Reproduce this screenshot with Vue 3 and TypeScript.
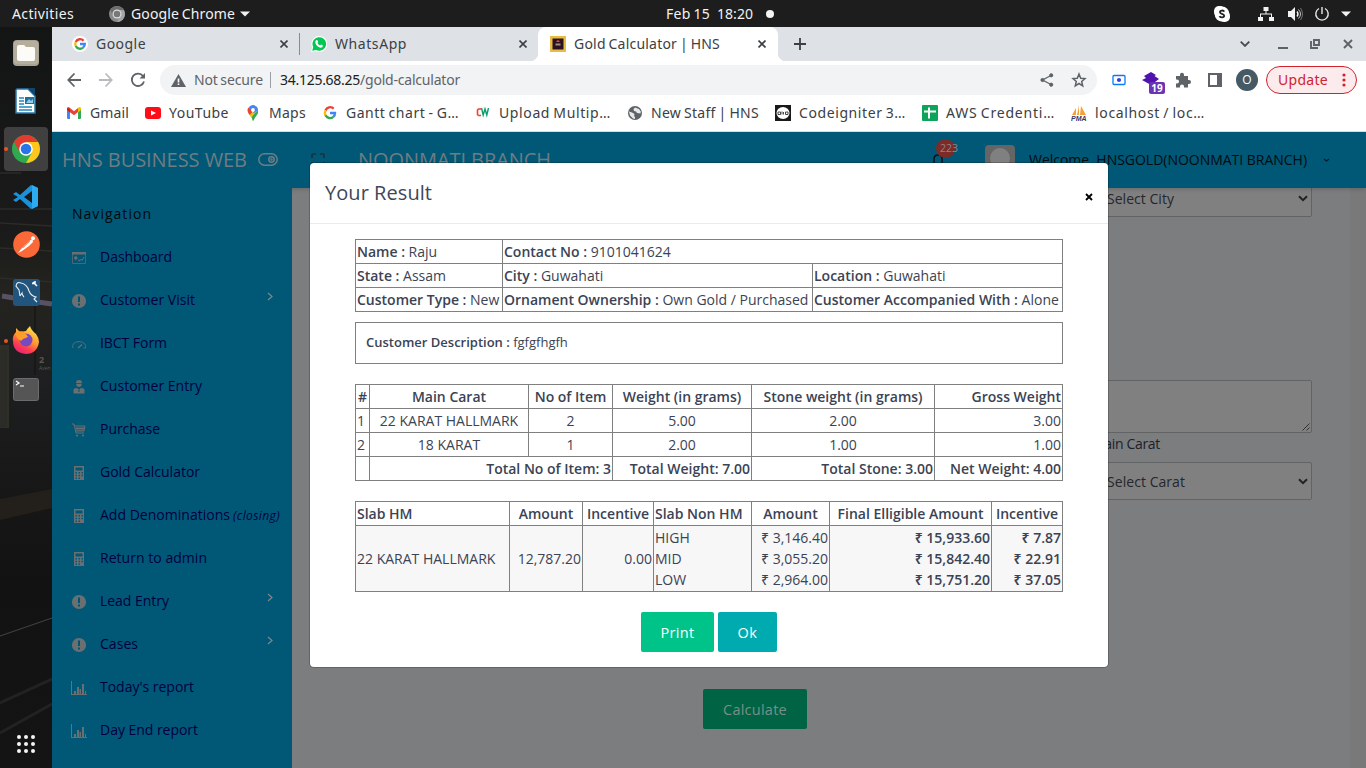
<script setup lang="ts">
interface Fit { value: number }
interface Tab { title: string; width: number; icon: string; active?: boolean }
interface Bookmark { title: string; width: number; icon: string }
interface NavItem { label: string; width: number; icon: string; note?: string; more?: boolean }

// Spreads a one-line label over the given width by adjusting its tracking.
const vFit = {
  mounted(el: HTMLElement, binding: Fit) {
    const count = (el.textContent ?? '').length
    const natural = el.getBoundingClientRect().width
    el.style.letterSpacing = `${(binding.value - natural) / count}px`
  },
}

const tabs: Tab[] = [
  { title: 'Google', width: 50, icon: 'google' },
  { title: 'WhatsApp', width: 72, icon: 'whatsapp' },
  { title: 'Gold Calculator | HNS', width: 146, icon: 'gold', active: true },
]

const bookmarks: Bookmark[] = [
  { title: 'Gmail', width: 39, icon: 'gmail' },
  { title: 'YouTube', width: 60, icon: 'youtube' },
  { title: 'Maps', width: 37, icon: 'maps' },
  { title: 'Gantt chart - G…', width: 113, icon: 'google' },
  { title: 'Upload Multip…', width: 112, icon: 'cw' },
  { title: 'New Staff | HNS', width: 108, icon: 'globe' },
  { title: 'Codeigniter 3…', width: 107, icon: 'code' },
  { title: 'AWS Credenti…', width: 109, icon: 'sheet' },
  { title: 'localhost / loc…', width: 110, icon: 'pma' },
]

const nav: NavItem[] = [
  { label: 'Dashboard', width: 72, icon: 'dash' },
  { label: 'Customer Visit', width: 95, icon: 'alert', more: true },
  { label: 'IBCT Form', width: 67, icon: 'gauge' },
  { label: 'Customer Entry', width: 102, icon: 'user' },
  { label: 'Purchase', width: 60, icon: 'cart' },
  { label: 'Gold Calculator', width: 100, icon: 'calc' },
  { label: 'Add Denominations', width: 130, icon: 'calc', note: '(closing)' },
  { label: 'Return to admin', width: 107, icon: 'calc' },
  { label: 'Lead Entry', width: 69, icon: 'alert', more: true },
  { label: 'Cases', width: 38, icon: 'alert', more: true },
  { label: "Today's report", width: 94, icon: 'chart' },
  { label: 'Day End report', width: 98, icon: 'chart' },
]

const items = [
  ['1', '22 KARAT HALLMARK', '2', '5.00', '2.00', '3.00'],
  ['2', '18 KARAT', '1', '2.00', '1.00', '1.00'],
]
</script>

<template>
  <div class="desktop">
    <header class="topbar">
      <span v-fit="62" class="t activities">Activities</span>
      <svg class="top-chrome" width="16" height="16" viewBox="0 0 16 16">
        <circle cx="8" cy="8" r="8" fill="#8b8b8b" />
        <path d="M1.2 4A8 8 0 0 1 14.8 4H8L4.5 10Z" fill="#6d6d6d" />
        <path d="M11.5 10L8 16A8 8 0 0 0 14.8 4H8Z" fill="#a5a5a5" />
        <circle cx="8" cy="8" r="4.5" fill="#ddd" /><circle cx="8" cy="8" r="3.3" fill="#777" />
      </svg>
      <span v-fit="104" class="t">Google Chrome</span>
      <svg class="top-caret" width="10" height="6"><path d="M0 .5H10L5 5.5Z" fill="#f2f2f2" /></svg>
      <div class="clock"><span v-fit="44" class="t">Feb 15</span><span v-fit="36" class="t time">18:20</span><i></i></div>
      <div class="status">
        <svg width="16" height="16" viewBox="0 0 16 16"><rect width="11" height="11" rx="5" fill="#fff" /><rect x="5" y="5" width="11" height="11" rx="5" fill="#fff" /><circle cx="8" cy="8" r="7.4" fill="#fff" /><path d="M10.3 5.6C9.5 4 5.9 4.200 6 6.200C6.100 8.300 10.200 7.400 10.200 9.800C10.100 12 6.200 11.900 5.500 10.200" fill="none" stroke="#222" stroke-width="1.8" /></svg>
        <svg class="net" width="16" height="16" viewBox="0 0 16 16" fill="#f2f2f2"><path d="M5.5 1h5v4h-2v2.500h5.500V11h2v4h-5v-4h2V8.500h-10V11h2v4H0v-4h2V7.500h5.500V5h-2z" /></svg>
        <svg class="vol" width="16" height="16" viewBox="0 0 16 16"><path d="M1 5h3l4-4v14l-4-4H1z" fill="#f2f2f2" /><path d="M10 5.500q2 2.500 0 5" fill="none" stroke="#f2f2f2" stroke-width="1.400" /><path d="M11.500 3.500q4 4.500 0 9" fill="none" stroke="#ccc" /><path d="M13.500 2q4 6 0 12" fill="none" stroke="#888" stroke-width=".8" /></svg>
        <svg class="pow" width="16" height="16" viewBox="0 0 16 16" fill="none" stroke="#e8e8e8" stroke-width="1.400"><path d="M5 2.500a6.200 6.200 0 1 0 6 0M8 1v7" /></svg>
        <svg class="car" width="10" height="6"><path d="M0 .5H10L5 5.5Z" fill="#f2f2f2" /></svg>
      </div>
    </header>

    <div class="workspace">
      <aside class="dock">
        <svg class="wall" width="52" height="741" viewBox="0 27 52 741">
          <defs>
            <linearGradient id="wg" x1="0" y1="0" x2="0" y2="1">
              <stop offset="0" stop-color="#131414" /><stop offset=".27" stop-color="#191a19" /><stop offset=".36" stop-color="#24231f" /><stop offset=".48" stop-color="#1d1f20" /><stop offset=".6" stop-color="#181818" /><stop offset=".75" stop-color="#121212" /><stop offset="1" stop-color="#141414" />
            </linearGradient>
          </defs>
          <rect y="27" width="52" height="741" fill="url(#wg)" />
          <g stroke="#2b2b28" stroke-width="1.5"><path d="M0 173H21M0 209H52M0 223L52 226M0 248L52 251M0 278L52 282" /></g>
          <path d="M2 296L20 299M38 302L52 304" stroke="#6e6681" stroke-width="5" opacity=".7" />
          <path d="M0 345H9V428H0" fill="#302f25" /><path d="M0 350H7V427H0" fill="#2b2c28" />
          <path d="M35 305V375" stroke="#111" />
          <text x="39" y="363" class="wall-number">2</text><text x="39" y="370" class="wall-street">Aven</text>
          <path d="M0 499L52 489V508L0 520Z" fill="#231f1b" />
          <path d="M0 636L52 618" stroke="#454442" /><path d="M0 703L52 679M0 733L52 704" stroke="#222" stroke-width="3" />
        </svg>
        <div class="app"><svg width="26" height="26" viewBox="0 0 26 26"><rect width="26" height="26" rx="4" fill="#a8a294" /><rect x="1" y="1" width="24" height="23" rx="3" fill="#b5ae9d" /><path d="M4 7q0-2 2-2h5l2 2h7q2 0 2 2v10q0 2-2 2H6q-2 0-2-2z" fill="#fcfbf8" /></svg></div>
        <div class="app"><svg width="24" height="26" viewBox="0 0 24 26"><path d="M3 1H14L21 8V25H2V2Z" fill="#fff" stroke="#247aaa" stroke-width="1.500" /><path d="M14 0H21V8Z" fill="#0d4770" /><path d="M5 10h5M5 13h5M5 16h5M5 19h13M5 22h13" stroke="#2386bd" stroke-width="1.300" /><rect x="11" y="9" width="9" height="7" fill="#1d719f" /><path d="M12 15l3-4 2 2 2-2v4z" fill="#91cdef" /></svg></div>
        <div class="app selected"><svg width="28" height="28" viewBox="0 0 28 28"><circle cx="14" cy="14" r="14" fill="#2faa50" /><path d="M1.900 7A14 14 0 0 1 26.100 7H14L8 17.500Z" fill="#e33b2e" /><path d="M26.100 7A14 14 0 0 1 14 28L20 17.500L14 7Z" fill="#fdc81b" /><circle cx="14" cy="14" r="6.800" fill="#fff" /><circle cx="14" cy="14" r="5.300" fill="#2875e8" /></svg></div>
        <div class="app"><svg width="26" height="26" viewBox="0 0 26 26"><path d="M18 1L25 4V22L18 25L7 15L3 18L0 16L5 13L0 10L3 8L7 11ZM19 7L11 13L19 19Z" fill="#1a91d9" fill-rule="evenodd" /><path d="M19 1L25 4V22L19 25Z" fill="#2eaaf1" /></svg></div>
        <div class="app raised"><svg width="27" height="27" viewBox="0 0 27 27"><circle cx="13.500" cy="13.500" r="13.300" fill="#fb6939" /><circle cx="20" cy="7.200" r="2" fill="#fff" /><path d="M19.500 8.500L17.500 9L9 17L5 22L9 20L16 15L20 11Z" fill="#fff" /><path d="M17 10L10 17" stroke="#fb6939" stroke-width=".7" /></svg></div>
        <div class="app raised"><svg width="27" height="27" viewBox="0 0 27 27"><rect width="27" height="27" rx="3" fill="#21557d" /><path d="M7 17L6 11L3 7Q4 2 8 4Q14 5 16 12Q18 17 23 18L21 20L24 23M7 17L9 14Q9 16 11 18" fill="none" stroke="#e8edf1" stroke-width="1.100" /><path d="M20 3L24 7M19 4.500h3V2" stroke="#fff" stroke-width="1.500" fill="none" /></svg></div>
        <div class="app raised"><svg width="28" height="28" viewBox="0 0 28 28"><defs><linearGradient id="fg" x1=".8" y1="0" x2=".3" y2="1"><stop stop-color="#ffe94b" /><stop offset=".48" stop-color="#ff9830" /><stop offset=".75" stop-color="#ff3d50" /><stop offset="1" stop-color="#e62375" /></linearGradient></defs><path d="M14 5Q15 3 18 0Q19 4 24 8Q27 12 27 16Q25 28 14 28Q1 27 1 15Q0 10 4 6L4 2L8 6Z" fill="url(#fg)" /><circle cx="14" cy="14" r="6.500" fill="#784abe" /><path d="M5 6Q12 3 16 11L11 13L9 15Q3 12 5 6" fill="#ff9e27" /></svg></div>
        <div class="app"><svg width="26" height="23" viewBox="0 0 26 23"><rect x=".5" y=".5" width="25" height="22" rx="2" fill="#555" stroke="#6c6c6c" /><path d="M3 3l3 2-3 2M7 8h4" fill="none" stroke="#fff" stroke-width="1.200" /></svg></div>
        <svg class="grid-icon" width="18" height="18" viewBox="0 0 18 18" fill="#f4f4f4"><template v-for="r in 3" :key="r"><circle v-for="c in 3" :key="c" :cx="c * 7 - 5" :cy="r * 7 - 5" r="2" /></template></svg>
        <span class="dot d1"></span><span class="dot d2"></span>
      </aside>

      <div class="browser">
        <div class="tabs">
          <div v-for="tab in tabs" :key="tab.title" class="tab" :class="{ active: tab.active, line: tab.icon === 'google' }">
            <svg v-if="tab.icon === 'google'" width="16" height="16" viewBox="0 0 16 16" fill="none" stroke-width="2.300"><circle cx="8" cy="8" r="8" fill="#fff" /><path d="M11.600 4.800A4.800 4.800 0 0 0 3.700 5.900" stroke="#ea4335" /><path d="M3.700 5.900A4.800 4.800 0 0 0 3.700 10.100" stroke="#fbbc05" /><path d="M3.700 10.100A4.800 4.800 0 0 0 11.100 11.600" stroke="#34a853" /><path d="M11.100 11.600Q12.800 10.200 12.800 8H8" stroke="#4285f4" /></svg>
            <svg v-else-if="tab.icon === 'whatsapp'" width="16" height="16" viewBox="0 0 16 16"><path d="M0 16L1.200 11.500A8 8 0 1 1 4.500 15Z" fill="#fff" /><path d="M1.200 14.800L2.200 11A6.800 6.800 0 1 1 5 13.900Z" fill="#00c853" /><path d="M5 4.200L6.300 4L7.200 6L6.500 7Q7.400 8.800 9 9.500L10 8.600L12 9.500Q11.800 11.700 9.600 11.700Q6.500 11.400 4.500 7.500Q3.900 5.500 5 4.200" fill="#fff" /></svg>
            <svg v-else width="16" height="16" viewBox="0 0 16 16"><rect width="16" height="16" fill="#e8bd43" /><rect x="2.500" y="2.500" width="11" height="11" fill="#2b1220" /><path d="M6.500 5l1.500-1 1.500 1v1h-3z" fill="#f04428" /><path d="M5.500 7.500h5v2h-5z" fill="#a58a80" /></svg>
            <span v-fit="tab.width" class="t lift">{{ tab.title }}</span>
            <svg class="x" width="8" height="8" viewBox="0 0 8 8"><path d="M.5.5l7 7M7.500.5l-7 7" stroke="#3c4043" stroke-width="1.600" /></svg>
          </div>
          <svg class="plus" width="12" height="12"><path d="M6 0v12M0 6h12" stroke="#3c4043" stroke-width="1.800" /></svg>
          <div class="win">
            <svg class="w1" width="10" height="6"><path d="M.7.700l4.300 4.200L9.300.700" fill="none" stroke="#45494d" stroke-width="1.800" /></svg>
            <svg class="w2" width="10" height="10"><path d="M0 9h10" stroke="#5f6368" stroke-width="2" /></svg>
            <svg class="w3" width="10" height="10" fill="none" stroke="#5f6368" stroke-width="1.900"><path d="M4 1h5v5H4zM1 2v7h7" /></svg>
            <svg width="10" height="10"><path d="M1 1l8 8M9 1L1 9" stroke="#5f6368" stroke-width="1.900" /></svg>
          </div>
        </div>

        <div class="toolbar">
          <svg class="arrow" width="32" height="16" viewBox="-9 0 32 16" fill="none" stroke="#5f6368" stroke-width="1.800"><path d="M14 8H1.500M7.500 1.500L1.300 8L7.500 14.500" /></svg>
          <svg width="32" height="16" viewBox="-9 0 32 16" fill="none" stroke="#b9bbbe" stroke-width="1.800"><path d="M0 8H12.500M6.500 1.500L12.700 8L6.500 14.500" /></svg>
          <svg width="32" height="16" viewBox="-8 0 32 16" fill="none" stroke="#5f6368" stroke-width="1.800"><path d="M13 4A6.200 6.200 0 1 0 14 9.500" /><path d="M15 1V6.500H9.500Z" fill="#5f6368" stroke="none" /></svg>
          <div class="omnibox">
            <svg class="warn" width="15" height="13" viewBox="0 0 15 13"><path d="M7.500 0L15 13H0Z" fill="#5f6368" /><path d="M7.500 4.500v4M7.500 9.500v1.600" stroke="#fff" stroke-width="1.600" /></svg>
            <span v-fit="69" class="t lift muted">Not secure</span><i class="sep"></i><span v-fit="80" class="t lift host">34.125.68.25</span><span v-fit="100" class="t lift muted">/gold-calculator</span>
            <svg class="share" width="14" height="14" viewBox="0 0 14 14" stroke="#5f6368" fill="#5f6368"><circle cx="11.200" cy="2.300" r="1.600" /><circle cx="2.500" cy="7" r="1.600" /><circle cx="11.200" cy="11.700" r="1.600" /><path d="M11 2.500L2.500 7L11 11.500" fill="none" stroke-width="1.300" /></svg>
            <svg width="16" height="16" viewBox="0 0 16 16"><path d="M8 2L9.700 6.200l4.300.400-3.300 2.900 1 4.300L8 11.500l-3.700 2.300 1-4.300L2 6.600l4.300-.400z" fill="none" stroke="#5f6368" stroke-width="1.500" /></svg>
          </div>
          <div class="ext"><svg width="14" height="12"><rect x="1" y="1.500" width="12" height="9" rx="1" fill="#fff" stroke="#087af5" stroke-width="1.300" /><circle cx="7" cy="6" r="2.100" fill="#3941d9" /></svg></div>
          <div class="ext"><svg width="18" height="16" viewBox="0 0 18 16"><path d="M9 0L14 3L12.500 4L17 7L9 13L0 8L4 6L2 4Z" fill="#5113ad" /></svg><b>19</b></div>
          <div class="ext"><svg width="16" height="16" viewBox="0 0 16 16"><path d="M1 4h4V2.800a2 2 0 0 1 4 0V4h4v4h1a2 2 0 0 1 0 4h-1v3.500H9v-1a2 2 0 0 0-4 0v1H1v-4h1a2 2 0 0 0 0-4H1z" fill="#5f6368" /></svg></div>
          <div class="ext"><svg width="14" height="14"><rect x="1" y="1" width="12" height="12" fill="#fff" stroke="#5f6368" stroke-width="2" /><path d="M9 1h4v12H9z" fill="#5f6368" /></svg></div>
          <div class="ext"><em class="avatar">O</em></div>
          <div class="update"><span v-fit="50" class="t lift">Update</span><svg width="4" height="14" fill="#d2222c"><circle cx="2" cy="2" r="1.600" /><circle cx="2" cy="7" r="1.600" /><circle cx="2" cy="12" r="1.600" /></svg></div>
        </div>

        <div class="bookmarks">
          <div v-for="b in bookmarks" :key="b.title" class="bm">
            <svg width="16" height="16" viewBox="0 0 16 16">
              <g v-if="b.icon === 'gmail'"><path d="M1 3h3v11H2q-1 0-1-1z" fill="#4285f4" /><path d="M12 5l3-2v10q0 1-1 1h-2z" fill="#34a853" /><path d="M1 3q1-2 3 0l4 3.200L12 3v4L8 10.300 1 5z" fill="#ea4335" /><path d="M12 3q2-2 3 0v2L12 7.500z" fill="#fbbc04" /><path d="M1 3v2l3 2.500V4z" fill="#c5221f" /></g>
              <g v-else-if="b.icon === 'youtube'"><rect y="2" width="16" height="12" rx="3" fill="#fe0d16" /><path d="M6 5.500L11 8 6 10.500z" fill="#fff" /></g>
              <g v-else-if="b.icon === 'maps'"><path d="M8 16Q7.200 12.500 4.500 9.500L12.800 5Q14 8.500 10.500 12Q9 14 8 16" fill="#34a853" /><path d="M3.500 2.500L9 6 4.500 10Q1 5 3.500 2.500" fill="#ea4335" /><path d="M11 5L4.500 10Q6 12 6.500 12.800L13 6z" fill="#fbbc04" /><path d="M4 2Q8-2 12 2Q13 3.500 13 5L9 8L4.500 3.500z" fill="#4285f4" /><path d="M13 5Q13 9 10 12L8 16Q7 13 7.500 11z" fill="#34a853" /><circle cx="8" cy="5" r="1.900" fill="#fff" /></g>
              <g v-else-if="b.icon === 'google'" fill="none" stroke-width="2.400"><path d="M11.700 3.600A5 5 0 0 0 3.500 5.500" stroke="#ea4335" /><path d="M3.500 5.500A5 5 0 0 0 3.500 10.300" stroke="#fbbc05" /><path d="M3.500 10.300A5 5 0 0 0 11.300 11.900" stroke="#34a853" /><path d="M11.300 11.900Q13 10.400 13 8H8" stroke="#4285f4" /></g>
              <g v-else-if="b.icon === 'cw'" fill="none" stroke-width="1.600"><path d="M6 4H3.500L2.500 5v4.500l1 1H6" stroke="#f3422e" /><path d="M6.500 3L8.200 10L10 4L11.800 10L13.500 3" stroke="#0a9e70" stroke-width="1.400" /></g>
              <g v-else-if="b.icon === 'globe'"><circle cx="8" cy="8" r="7" fill="#5f6368" /><path d="M2 6.500l3 1 2.500 1.500-.5 2 1 1v2l-2-.5-3-3zM8 2.500L6.500 4l.5 2 2 .5 1 1.500 3.500.5.300-2L12 4z" fill="#fff" opacity=".85" /></g>
              <g v-else-if="b.icon === 'code'"><rect width="16" height="16" fill="#17191b" /><ellipse cx="8" cy="8" rx="6.500" ry="6" fill="#fff" /><path d="M3 7h2.500v2.500H3zM7 6.500v3M8.500 7v2.500M10.500 7H13v2.500h-2.500z" fill="none" stroke="#333" stroke-width=".9" /></g>
              <g v-else-if="b.icon === 'sheet'"><rect width="16" height="16" rx="1" fill="#0ca45b" /><path d="M2 6.500h12M7 2.500v11" stroke="#fff" stroke-width="2" /></g>
              <g v-else><path d="M1 10L5 3v7zM6 10L8 0v10zM9 10L10 1 15 10z" fill="#f6a136" /><text x="0" y="15.500" class="pma">PMA</text></g>
            </svg>
            <span v-fit="b.width" class="t">{{ b.title }}</span>
          </div>
        </div>

        <div class="page">
          <div class="site-head">
            <span v-fit="185" class="brand">HNS BUSINESS WEB</span>
            <svg class="toggle" width="20" height="13" viewBox="0 0 20 13" fill="none" stroke="#6e7d84" stroke-width="1.500"><rect x=".8" y=".8" width="18.400" height="11.400" rx="5.700" /><circle cx="13.500" cy="6.500" r="2.700" /><circle cx="13.500" cy="6.500" r=".5" /></svg>
            <svg class="full" width="14" height="14" viewBox="0 0 14 14" fill="none" stroke="#1c303a" stroke-width="1.600"><path d="M1 5V2q0-1 1-1h3M9 1h3q1 0 1 1v3M13 9v3q0 1-1 1H9M5 13H2q-1 0-1-1V9" /></svg>
            <span v-fit="193" class="brand">NOONMATI BRANCH</span>
            <div class="bell"><svg width="14" height="15" viewBox="0 0 14 15" fill="none" stroke="#091015" stroke-width="1.500"><path d="M1 11.200H13M3 11V6Q3 2 7 2Q11 2 11 6V11M5 13q2 2 4 0" /></svg><i></i><span class="badge">223</span></div>
            <div class="person"><i></i></div>
            <span v-fit="278" class="welcome">Welcome, HNSGOLD(NOONMATI BRANCH)</span>
            <svg class="down" width="7" height="5"><path d="M1 1l2.500 2L6 1" fill="none" stroke="#071820" stroke-width="1.200" /></svg>
          </div>

          <div class="columns">
            <nav class="side">
              <h2><span v-fit="80">Navigation</span></h2>
              <a v-for="n in nav" :key="n.label">
                <svg width="16" height="16" viewBox="0 0 16 16" fill="#6a6f72">
                  <g v-if="n.icon === 'dash'"><path d="M1 2h14v2.500H1z" /><path d="M1.500 2.500h13v11h-13z" fill="none" stroke="#6a6f72" stroke-width=".7" /><path d="M7 10l1.500 1 1-2 1.500 1.500L13 7" fill="none" stroke="#6a6f72" /><circle cx="4.800" cy="8" r="1.800" /></g>
                  <g v-else-if="n.icon === 'alert'"><circle cx="8" cy="8" r="7.100" /><path d="M8 3.500v5.500M8 10.500v2" stroke="#005573" stroke-width="2" /></g>
                  <g v-else-if="n.icon === 'gauge'" fill="none" stroke="#6a6f72"><path d="M2 12Q0 6.500 8 5.500Q16 6.500 14.500 12H12.500" stroke-width=".8" /><path d="M7 12L11 8.500" stroke-width="1.300" /></g>
                  <g v-else-if="n.icon === 'user'"><path d="M5 4Q5 1 8 1T11 4H5ZM5.200 4.700h5.600Q10.500 8 8 8T5.200 4.700ZM2.500 14.500V11q0-2 3.500-2l2 1.500L10 9q3.500 0 3.500 2v3.500z" /><path d="M8 10.500v2.500" stroke="#005573" /></g>
                  <g v-else-if="n.icon === 'cart'" fill="none" stroke="#6a6f72"><path d="M1 2h2l2 9h8M4 4h10l-1 5H5M6 5v4M8 5v4M10 5v4M12 5v4M4.500 6.500h9" /><circle cx="6" cy="13.500" r="1" fill="#6a6f72" stroke="none" /><circle cx="12" cy="13.500" r="1" fill="#6a6f72" stroke="none" /></g>
                  <g v-else-if="n.icon === 'calc'"><path d="M3 1h10v14H3zM4.500 2.500v3h7v-3zM4.500 7v1.500H6V7zm3 0v1.500H9V7zm3 0v1.500H12V7zm-6 2.800v1.500H6V9.800zm3 0v1.500H9V9.800zm3 0v1.500H12V9.800zm-6 2.700V14H6v-1.500zm3 0V14H9v-1.500z" fill-rule="evenodd" /></g>
                  <g v-else><path d="M0 1h1v13h15v1H0z" /><path d="M3 11h2v3H3zM6 7h2v7H6zM8.500 9h1.500v5H8.500zM11 4h2v10h-2zM14 11h1v3h-1z" /></g>
                </svg>
                <span v-fit="n.width" class="label">{{ n.label }}</span>
                <span v-if="n.note" v-fit="47" class="note">{{ n.note }}</span>
                <svg v-if="n.more" class="more" width="6" height="9"><path d="M1 1l4 3.500L1 8" fill="none" stroke="#80878a" stroke-width="1.200" /></svg>
              </a>
            </nav>
            <main class="main">
              <div class="form">
                <div class="select city"><span v-fit="67">Select City</span><svg width="10" height="7"><path d="M1 1.200l4 4 4-4" fill="none" stroke="#202124" stroke-width="2" /></svg></div>
                <div class="area"><svg width="8" height="8"><path d="M.5 7.500l7-7M4.500 7.500l3-3" stroke="#333" /></svg></div>
                <div class="carat"><span v-fit="68">Main Carat</span></div>
                <div class="select"><span v-fit="78">Select Carat</span><svg width="10" height="7"><path d="M1 1.200l4 4 4-4" fill="none" stroke="#202124" stroke-width="2" /></svg></div>
              </div>
              <button class="calculate"><span v-fit="64">Calculate</span></button>
            </main>
          </div>

          <section class="modal">
            <header><h1><span v-fit="107">Your Result</span></h1><svg width="8" height="8"><path d="M1 1l6 6M7 1L1 7" stroke="#000" stroke-width="1.800" /></svg></header>
            <div class="body">
              <table>
                <colgroup><col class="c147"><col class="c310"><col class="c250"></colgroup>
                <tbody>
                  <tr><td><b>Name :</b> Raju</td><td colspan="2"><b>Contact No :</b> 9101041624</td></tr>
                  <tr><td><b>State :</b> Assam</td><td><b>City :</b> Guwahati</td><td><b>Location :</b> Guwahati</td></tr>
                  <tr><td><b>Customer Type :</b> New</td><td><b>Ornament Ownership :</b> Own Gold / Purchased</td><td><b>Customer Accompanied With :</b> Alone</td></tr>
                </tbody>
              </table>
              <p class="desc"><b>Customer Description :</b> fgfgfhgfh</p>
              <table class="carats">
                <colgroup><col class="c14"><col class="c159"><col class="c84"><col class="c139"><col class="c183"><col class="c128"></colgroup>
                <thead><tr><th>#</th><th>Main Carat</th><th>No of Item</th><th>Weight (in grams)</th><th>Stone weight (in grams)</th><th class="r">Gross Weight</th></tr></thead>
                <tbody>
                  <tr v-for="row in items" :key="row[0]"><td v-for="(cell, i) in row" :key="i" :class="i === 0 ? 'l' : i === 5 ? 'r' : 'c'">{{ cell }}</td></tr>
                  <tr class="total"><td></td><td colspan="2">Total No of Item: 3</td><td>Total Weight: 7.00</td><td>Total Stone: 3.00</td><td>Net Weight: 4.00</td></tr>
                </tbody>
              </table>
              <table class="slabs">
                <colgroup><col class="c154"><col class="c73"><col class="c71"><col class="c98"><col class="c78"><col class="c162"><col class="c71"></colgroup>
                <thead><tr><th class="l">Slab HM</th><th>Amount</th><th>Incentive</th><th class="l">Slab Non HM</th><th>Amount</th><th>Final Elligible Amount</th><th>Incentive</th></tr></thead>
                <tbody><tr>
                  <td>22 KARAT HALLMARK</td><td class="r">12,787.20</td><td class="r">0.00</td><td>HIGH<br>MID<br>LOW</td>
                  <td class="r">₹ 3,146.40<br>₹ 3,055.20<br>₹ 2,964.00</td>
                  <td class="r"><b>₹ 15,933.60<br>₹ 15,842.40<br>₹ 15,751.20</b></td>
                  <td class="r"><b>₹ 7.87<br>₹ 22.91<br>₹ 37.05</b></td>
                </tr></tbody>
              </table>
              <div class="actions"><button class="print"><span v-fit="34">Print</span></button><button class="ok"><span v-fit="20">Ok</span></button></div>
            </div>
          </section>
        </div>
      </div>
    </div>
  </div>
</template>

<style>
body { margin: 0; overflow: hidden; }
</style>

<style scoped>
* { box-sizing: border-box; }
svg { flex: none; display: block; }
.desktop { width: 1366px; height: 768px; overflow: hidden; display: flex; flex-direction: column; font-family: "Open Sans", "Noto Sans", sans-serif; font-size: 14px; }
.t { font-family: "Noto Sans", "Open Sans", sans-serif; font-size: 14px; white-space: pre; flex: none; word-spacing: -1px; }
span { white-space: nowrap; flex: none; }
.lift { margin-top: -2px; }
.topbar { position: relative; height: 27px; flex: none; background: #1d1d1d; color: #f2f2f2; display: flex; align-items: center; padding-left: 12px; }
.top-chrome { margin: 0 6px 0 35px; }
.top-caret { margin-left: 5px; }
.clock { margin-left: 416px; display: flex; align-items: center; }
.clock .time { margin-left: 7px; }
.clock i { width: 8px; height: 8px; border-radius: 50%; background: #f5f5f5; margin-left: 13px; }
.status { display: flex; align-items: center; margin-left: auto; padding-right: 15px; }
.net { margin-left: 28px; }
.vol { margin-left: 13px; }
.pow { margin-left: 11px; }
.car { margin-left: 11px; }
.workspace { flex: 1; display: flex; min-height: 0; }
.dock { position: relative; width: 52px; flex: none; display: flex; flex-direction: column; align-items: center; padding-top: 2px; overflow: hidden; }
.wall { position: absolute; left: 0; top: 0; }
.wall-number { font: bold 9px "Open Sans", sans-serif; fill: #575753; }
.wall-street { font: 5px "Open Sans", sans-serif; fill: #575753; }
.app { position: relative; width: 44px; height: 44px; margin: 2px 0; border-radius: 4px; display: flex; align-items: center; justify-content: center; }
.raised { padding-bottom: 2px; }
.selected { background: #404040; }
.dot { position: absolute; left: 4px; width: 4px; height: 4px; border-radius: 50%; background: #e9541f; }
.d1 { top: 120px; }
.d2 { top: 312px; }
.grid-icon { position: relative; margin-top: auto; margin-bottom: 15px; }
.browser { flex: 1; display: flex; flex-direction: column; min-width: 0; background: #fff; color: #3c4043; }
.tabs { height: 34px; flex: none; background: #dee1e6; padding-left: 8px; display: flex; align-items: center; }
.tab { position: relative; width: 239px; height: 34px; display: flex; align-items: center; padding: 0 11px 0 12px; gap: 8px; }
.tab .x { margin-left: auto; }
.line { width: 240px; margin-right: -1px; border-right: 1px solid #898c91; border-image: linear-gradient(transparent 20%, #898c91 20%, #898c91 80%, transparent 80%) 1; }
.active { width: 240px; background: #fff; border-radius: 8px 8px 0 0; padding-right: 12px; }
.active::before, .active::after { content: ""; position: absolute; bottom: 0; width: 8px; height: 8px; }
.active::before { left: -8px; background: radial-gradient(circle at 0 0, #dee1e6 8px, #fff 8.5px); }
.active::after { right: -8px; background: radial-gradient(circle at 100% 0, #dee1e6 8px, #fff 8.5px); }
.plus { margin-left: 16px; }
.win { margin-left: auto; display: flex; align-items: center; padding-right: 13px; }
.w1 { margin-right: 28px; }
.w2 { margin-right: 22px; }
.w3 { margin-right: 23px; }
.toolbar { height: 38px; flex: none; display: flex; align-items: center; padding-left: 6px; }
.omnibox { width: 937px; height: 30px; border-radius: 15px; margin-left: 6px; background: #f1f3f4; display: flex; align-items: center; padding: 0 10px 0 11px; flex: none; }
.warn { margin-right: 8px; }
.muted { color: #5f6368; }
.host { color: #202124; }
.sep { width: 1px; height: 16px; background: #9aa0a6; margin: 0 9px 0 7px; }
.share { margin: 0 17px 0 auto; }
.ext { position: relative; width: 32px; height: 34px; display: flex; align-items: center; justify-content: center; left: 6px; }
.ext b { position: absolute; left: 14px; top: 19px; width: 16px; height: 12px; border-radius: 2px; background: #6b33b6; color: #fff; font-size: 10px; line-height: 12px; text-align: center; }
.avatar { width: 22px; height: 22px; border-radius: 50%; background: #455a64; color: #fff; font-style: normal; font-size: 12px; line-height: 22px; text-align: center; }
.update { width: 91px; height: 28px; margin-left: 9px; border: 1px solid #d2222c; border-radius: 14px; background: #fbebec; color: #d2222c; display: flex; align-items: center; justify-content: space-between; padding: 0 10px 0 11px; flex: none; }
.bookmarks { height: 33px; flex: none; display: flex; align-items: center; gap: 16px; padding: 0 0 5px 14px; border-bottom: 1px solid #dadce0; }
.bm { display: flex; align-items: center; gap: 8px; flex: none; }
.pma { font: italic bold 7px "Liberation Sans", sans-serif; fill: #353567; }
.page { position: relative; flex: 1; display: flex; flex-direction: column; min-height: 0; overflow: hidden; background: #7c7d7f; }
.site-head { height: 56px; flex: none; background: #005876; display: flex; align-items: center; padding: 0 0 2px 10px; box-shadow: 0 1px 5px rgba(0, 0, 0, .2); position: relative; }
.brand { font-size: 20px; color: #6f7c82; }
.toggle { margin: 1px 0 0 11px; }
.full { margin: 1px 33px 0; }
.bell { position: relative; width: 14px; margin: 2px 0 0 380px; }
.bell i { position: absolute; left: 5px; top: -14px; width: 19px; height: 19px; border-radius: 50%; background: #7d2b27; }
.badge { position: absolute; left: 9px; top: -13px; font-size: 10.5px; line-height: 16px; color: #8d8587; }
.person { width: 30px; height: 30px; border-radius: 4px; background: #656565; margin: 2px 14px 0 40px; display: flex; align-items: center; justify-content: center; }
.person i { width: 20px; height: 20px; border-radius: 50%; background: #808080; margin-top: -4px; }
.welcome { color: #000b11; }
.down { margin: 3px 0 0 16px; }
.columns { flex: 1; display: flex; min-height: 0; }
.side { position: relative; width: 240px; flex: none; background: #005876; padding: 5px 0 0 20px; color: #00003f; }
.side h2 { margin: 0; height: 42px; line-height: 42px; font-size: 14px; font-weight: 400; color: #00080d; }
.side a { height: 43px; display: flex; align-items: center; position: relative; }
.side a > svg:first-child { margin: 3px 13px 0 -1px; }
.note { font-size: 12px; font-style: italic; margin: 2px 0 0 3px; }
.side .more { margin: -6px 19px 0 auto; }
.main { flex: 1; display: flex; flex-direction: column; align-items: flex-start; border-right: 16px solid #7a7979; }
.form { margin-left: 801px; width: 219px; flex: none; color: #24272c; }
.select { height: 38px; border: 1px solid #626364; border-radius: 2px; background: #808080; display: flex; align-items: center; justify-content: space-between; padding: 0 3px 0 13px; }
.city { margin-top: -9px; }
.area { margin-top: 163px; height: 53px; border: 1px solid #626364; border-radius: 2px; background: #808080; display: flex; align-items: flex-end; justify-content: flex-end; padding: 1px; }
.carat { height: 29px; line-height: 22px; color: #1c2027; margin-left: -1px; }
.calculate { margin: 189px 0 0 411px; width: 104px; height: 40px; background: #006344; color: #799087; }
button { border: 0; border-radius: 2px; padding: 0; font: 14.5px "Open Sans", sans-serif; }
.modal { position: absolute; left: 258px; top: 31px; width: 798px; height: 504px; background: #fff; border-radius: 4px; box-shadow: 0 0 0 1px rgba(0, 0, 0, .2); color: #3b4354; overflow: hidden; }
.modal header { height: 61px; border-bottom: 1px solid #e9ebed; display: flex; align-items: center; justify-content: space-between; padding: 0 15px; }
.modal header svg { margin-top: 7px; }
h1 { margin: -2px 0 0; font-size: 20px; font-weight: 400; color: #3f465a; }
.body { padding: 15px 45px; }
table { width: 708px; table-layout: fixed; border-collapse: collapse; line-height: 21px; }
td, th { border: 1px solid #808080; padding: 1px; font-size: 14px; white-space: nowrap; overflow: visible; }
td b, .desc b, th { font-weight: 600; }
.l { text-align: left; }
.c { text-align: center; }
.r { text-align: right; }
.total td { text-align: right; font-weight: 600; }
.desc { margin: 10px 0 20px; width: 708px; height: 42px; border: 1px solid #808080; padding: 0 10px; line-height: 38px; font-size: 13px; }
.carats { margin-bottom: 20px; }
.slabs tbody tr { background: #f7f7f7; }
.actions { display: flex; justify-content: center; gap: 4px; margin-top: 20px; }
.actions button { color: #fff; height: 40px; }
.print { width: 73px; background: #00c389; }
.ok { width: 59px; background: #00abb0; }
.c147 { width: 147px; } .c310 { width: 310px; } .c250 { width: 250px; }
.c14 { width: 14px; } .c159 { width: 159px; } .c84 { width: 84px; } .c139 { width: 139px; } .c183 { width: 183px; } .c128 { width: 128px; }
.c154 { width: 154px; } .c73 { width: 73px; } .c71 { width: 71px; } .c98 { width: 98px; } .c78 { width: 78px; } .c162 { width: 162px; }
</style>
